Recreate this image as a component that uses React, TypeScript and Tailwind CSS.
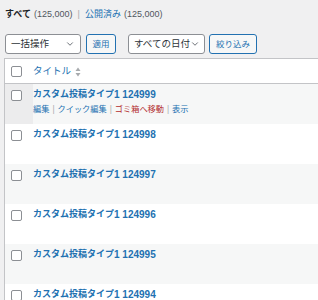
import { ChevronDown } from 'lucide-react';

const FONT = '"Liberation Sans", "Noto Sans CJK JP", sans-serif';

const rows = ['124999', '124998', '124997', '124996', '124995', '124994'];

function Check() {
  return <div className="w-[11px] h-[11px] rounded-[2px] border border-[#8c8f94] bg-white" />;
}

function Select({ label, width }: { label: string; width: string }) {
  return (
    <div
      className={`${width} h-[20px] flex items-center justify-between pl-[5px] pr-[5px] bg-white border border-[#8c8f94] rounded-[3px] text-[9.5px] text-[#2c3338] whitespace-nowrap`}
    >
      <span>{label}</span>
      <ChevronDown className="w-[10px] h-[10px] shrink-0 text-[#50575e]" strokeWidth={2} />
    </div>
  );
}

function Button({ label, width }: { label: string; width: string }) {
  return (
    <div
      className={`${width} h-[20px] flex items-center justify-center bg-[#f6f7f7] border border-[#2271b1] rounded-[3px] text-[8.5px] text-[#2271b1] whitespace-nowrap`}
    >
      {label}
    </div>
  );
}

function SortIcon() {
  return (
    <svg width="6" height="10" viewBox="0 0 6 10" className="ml-[4px]">
      <path d="M3 0.5 L5.5 4 L0.5 4 Z" fill="#a7aaad" />
      <path d="M3 9.5 L5.5 6 L0.5 6 Z" fill="#a7aaad" />
    </svg>
  );
}

export default function App() {
  return (
    <div className="w-[318px] h-[300px] overflow-hidden bg-[#f0f0f1]" style={{ fontFamily: FONT }}>
      {/* Status links */}
      <div className="h-[24px] pt-[6px] pl-[5px] flex items-center text-[9px] whitespace-nowrap">
        <span className="font-bold text-[#1d2327]">すべて</span>
        <span className="ml-[3px] text-[#50575e]">(125,000)</span>
        <span className="mx-[5px] text-[#a7aaad]">|</span>
        <span className="text-[#2271b1]">公開済み</span>
        <span className="ml-[3px] text-[#50575e]">(125,000)</span>
      </div>

      {/* Bulk actions and filters */}
      <div className="mt-[10px] pl-[5px] flex items-center">
        <Select label="一括操作" width="w-[76px]" />
        <div className="ml-[5px]">
          <Button label="適用" width="w-[30px]" />
        </div>
        <div className="ml-[12px]">
          <Select label="すべての日付" width="w-[77px]" />
        </div>
        <div className="ml-[4px]">
          <Button label="絞り込み" width="w-[48px]" />
        </div>
      </div>

      {/* Table */}
      <div className="mt-[4px] ml-[4px] w-[330px] bg-white border border-[#c3c4c7]">
        <div className="h-[25px] flex items-center border-b border-[#c3c4c7]">
          <div className="w-[28px] pl-[6px] flex items-center">
            <Check />
          </div>
          <div className="pt-[1px] flex items-center text-[9.5px] text-[#2271b1]">
            タイトル
            <SortIcon />
          </div>
        </div>
        {rows.map((id, i) => (
          <div key={id} className={`h-[40px] flex ${i % 2 === 0 ? 'bg-[#f6f7f7]' : 'bg-white'}`}>
            <div className={`w-[28px] pl-[6px] pt-[6px] ${i === 0 ? 'bg-[#ececed]' : ''}`}>
              <Check />
            </div>
            <div className="pt-[4px] whitespace-nowrap">
              <div className="h-[13px] flex items-center text-[9px] font-bold text-[#2271b1]">
                カスタム投稿タイプ<span className="text-[10px]">1 {id}</span>
              </div>
              {i === 0 && (
                <div className="mt-[3px] h-[12px] flex items-center text-[8.2px]">
                  <span className="text-[#2271b1]">編集</span>
                  <span className="mx-[3px] text-[#a7aaad]">|</span>
                  <span className="text-[#2271b1]">クイック編集</span>
                  <span className="mx-[3px] text-[#a7aaad]">|</span>
                  <span className="text-[#b32d2e]">ゴミ箱へ移動</span>
                  <span className="mx-[3px] text-[#a7aaad]">|</span>
                  <span className="text-[#2271b1]">表示</span>
                </div>
              )}
            </div>
          </div>
        ))}
      </div>
    </div>
  );
}
